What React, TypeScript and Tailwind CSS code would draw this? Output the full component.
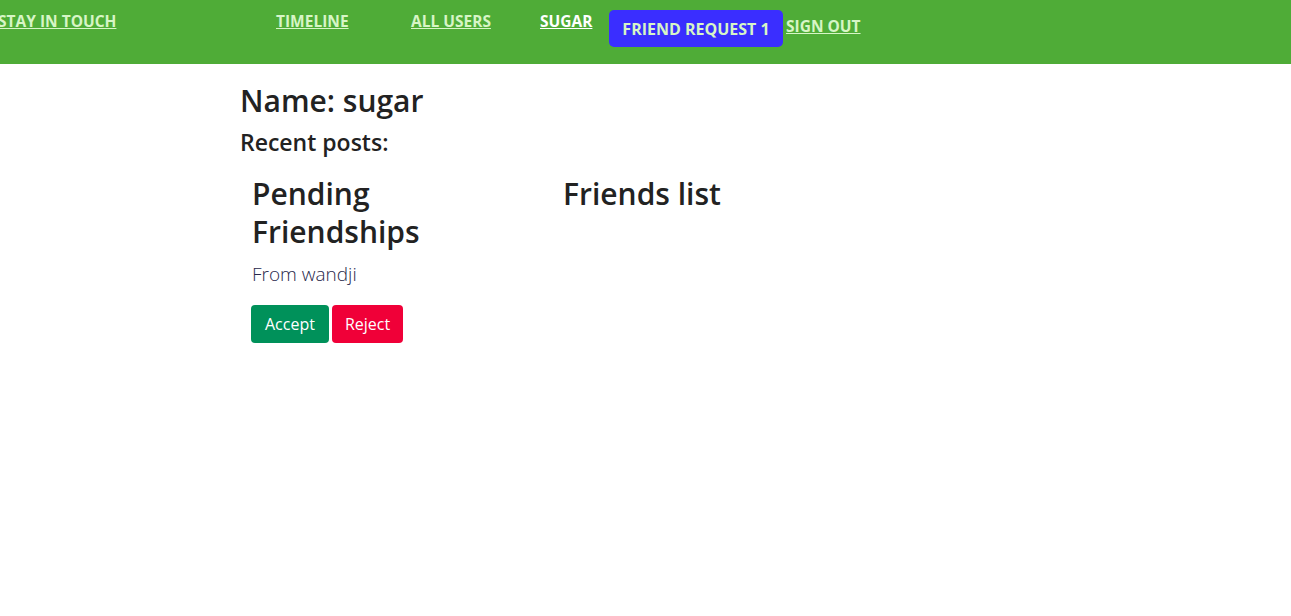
const navLink = "uppercase font-bold text-[15.5px] underline text-[#d7f5c6] leading-none";

const App = () => {
  return (
    <div className="min-h-screen bg-white font-['Open_Sans',sans-serif] text-[#222222]">
      <nav className="flex h-16 items-start bg-[#4fac37]">
        <a href="#" className={`${navLink} ml-[-2px] mt-[14px] w-[278px]`}>
          Stay in touch
        </a>
        <a href="#" className={`${navLink} mt-[14px] w-[135px]`}>
          Timeline
        </a>
        <a href="#" className={`${navLink} mt-[14px] w-[129px]`}>
          All users
        </a>
        <a href="#" className={`${navLink} mt-[14px] w-[69px] text-white`}>
          Sugar
        </a>
        <button className="mt-[10px] h-[37px] w-[174px] rounded-[5px] bg-[#3a2eff] text-[16px] font-bold uppercase text-[#d7f5c6]">
          Friend request 1
        </button>
        <a href="#" className={`${navLink} ml-[3px] mt-[19px]`}>
          Sign out
        </a>
      </nav>

      <main className="pl-[240px] pt-[19px]">
        <h1 className="text-[30px] font-semibold leading-[36px]">Name: sugar</h1>
        <h2 className="mt-[8px] text-[23px] font-semibold leading-[30px]">Recent posts:</h2>

        <div className="mt-[18px] flex">
          <section className="w-[311px] px-3">
            <h3 className="w-[200px] text-[30px] font-semibold leading-[38px]">
              Pending Friendships
            </h3>
            <p className="mt-[11px] text-[19px] font-light leading-[24px] text-[#27274a]">
              From wandji
            </p>
            <div className="mt-[19px] flex gap-[3px] ml-[-1px]">
              <button className="h-[38px] rounded-[4px] bg-[#00915a] px-[14px] text-[16px] text-white">
                Accept
              </button>
              <button className="h-[38px] rounded-[4px] bg-[#f00038] px-[13px] text-[16px] text-white">
                Reject
              </button>
            </div>
          </section>
          <section className="px-3">
            <h3 className="text-[30px] font-semibold leading-[38px]">Friends list</h3>
          </section>
        </div>
      </main>
    </div>
  );
};

export default App;
